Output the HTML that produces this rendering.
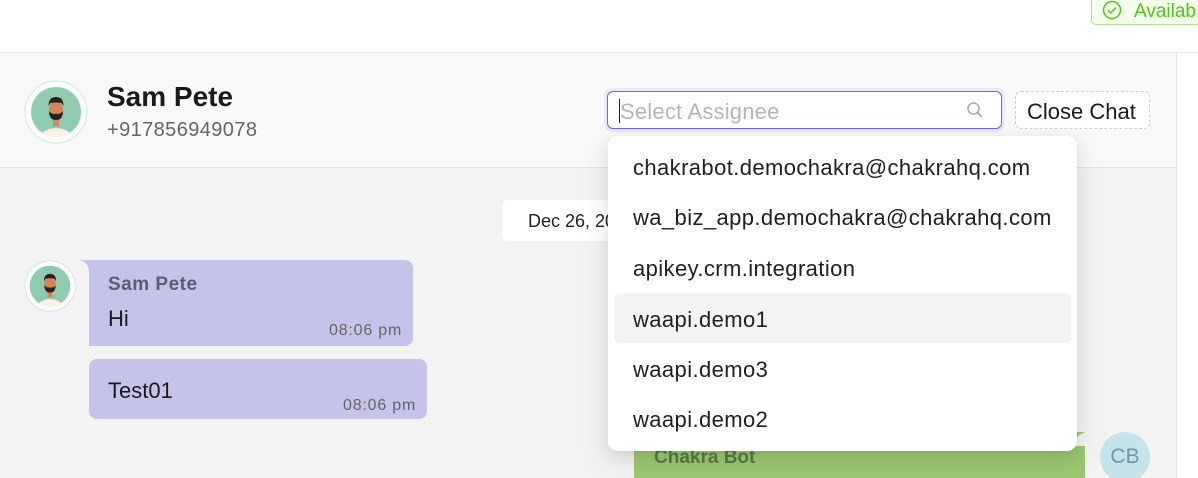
<!DOCTYPE html>
<html><head><style>
*{box-sizing:border-box;margin:0;padding:0}
html,body{width:1198px;height:478px;overflow:hidden}
body{position:relative;background:#fff;font-family:"Liberation Sans",sans-serif;}
.abs{position:absolute}
</style></head><body>
<div class="abs" style="left:1091px;top:-4px;width:120px;height:29px;background:#f3fdec;border:1px solid #a9e38f;border-radius:5px;color:#52c41a;font-size:19px;padding:4px 0 0 42px;">Availab</div>
<svg class="abs" style="left:1102px;top:0px" width="20" height="20" viewBox="0 0 20 20"><circle cx="10" cy="10" r="8.5" fill="none" stroke="#52c41a" stroke-width="1.5"/><path d="M6 10.2l2.8 2.8 5-5.5" fill="none" stroke="#52c41a" stroke-width="1.5"/></svg>
<div class="abs" style="left:0;top:52px;width:1176px;height:116px;background:#f9f9f9;border-top:1px solid #e8e8e8;border-bottom:1px solid #e3e3e3"></div>
<div class="abs" style="left:0;top:168px;width:1176px;height:310px;background:#f3f3f3"></div>
<div class="abs" style="left:1176px;top:52px;width:22px;height:426px;background:#fff;border-left:1px solid #e8e8e8;border-top:1px solid #e8e8e8"></div>
<svg class="abs" style="left:24px;top:80px" width="64" height="64" viewBox="0 0 64 64"><circle cx="32" cy="32" r="31" fill="#fff" stroke="#c9e6ea"/><circle cx="32" cy="32" r="25" fill="#8fcbae"/><clipPath id="c1"><circle cx="32" cy="32" r="25"/></clipPath><g clip-path="url(#c1)"><path d="M14 60q3-11 18-12q15 1 18 12z" fill="#fbf1e3"/><rect x="29" y="38" width="6" height="8" fill="#d88457"/><ellipse cx="32" cy="30" rx="7" ry="9" fill="#d88457"/><path d="M25 31q0 9 7 9q7 0 7-9q-2 3-7 3q-5 0-7-3z" fill="#2a2222"/><path d="M24.5 26q0-9 7.5-9q7.5 0 7.5 9l-2-3q-5.5-1-11 0z" fill="#2a2222"/></g></svg>
<div class="abs" style="left:107px;top:81px;font-size:28px;font-weight:bold;color:#1a1a1a">Sam Pete</div>
<div class="abs" style="left:107px;top:119px;font-size:20px;letter-spacing:0.4px;color:#666">+917856949078</div>
<div class="abs" style="left:604px;top:88px;width:401px;height:44px;border-radius:8px;background:#ece8fb"></div>
<div class="abs" style="left:607px;top:91px;width:395px;height:38px;border:1.5px solid #7b5cf5;border-radius:6px;background:#fff;font-size:22px;letter-spacing:0.2px;color:#b5b5b5;padding:7px 0 0 12px">Select Assignee</div>
<div class="abs" style="left:619px;top:99px;width:1px;height:24px;background:#222"></div>
<svg class="abs" style="left:966px;top:101px" width="18" height="18" viewBox="0 0 18 18"><circle cx="7.5" cy="7.5" r="5.5" fill="none" stroke="#aaa" stroke-width="1.6"/><path d="M11.5 11.5l4.5 4.5" stroke="#aaa" stroke-width="1.6"/></svg>
<div class="abs" style="left:1015px;top:91px;width:135px;height:38px;border:1px dashed #d0d0d0;border-radius:6px;background:#fff;font-size:22px;color:#1a1a1a;padding:7px 0 0 11px">Close Chat</div>
<div class="abs" style="left:502px;top:200px;width:140px;height:41px;background:#fff;border-radius:6px;font-size:18px;color:#222;padding:11px 0 0 26px">Dec 26, 2024</div>
<svg class="abs" style="left:24px;top:260px" width="52" height="52" viewBox="0 0 64 64"><circle cx="32" cy="32" r="31" fill="#fff" stroke="#c9e6ea"/><circle cx="32" cy="32" r="25" fill="#8fcbae"/><clipPath id="c2"><circle cx="32" cy="32" r="25"/></clipPath><g clip-path="url(#c2)"><path d="M14 60q3-11 18-12q15 1 18 12z" fill="#fbf1e3"/><rect x="29" y="38" width="6" height="8" fill="#d88457"/><ellipse cx="32" cy="30" rx="7" ry="9" fill="#d88457"/><path d="M25 31q0 9 7 9q7 0 7-9q-2 3-7 3q-5 0-7-3z" fill="#2a2222"/><path d="M24.5 26q0-9 7.5-9q7.5 0 7.5 9l-2-3q-5.5-1-11 0z" fill="#2a2222"/></g></svg>
<div class="abs" style="left:78px;top:260px;width:11px;height:11px;background:#c5c3ea"></div>
<div class="abs" style="left:78px;top:260px;width:11px;height:11px;background:#f3f3f3;border-top-right-radius:11px"></div>
<div class="abs" style="left:89px;top:260px;width:324px;height:86px;background:#c5c3ea;border-radius:0 8px 8px 0"></div>
<div class="abs" style="left:108px;top:274px;font-size:19px;letter-spacing:0.5px;font-weight:bold;color:#5d5c70">Sam Pete</div>
<div class="abs" style="left:108px;top:306px;font-size:22px;color:#1a1a1a">Hi</div>
<div class="abs" style="left:329px;top:322px;font-size:16px;letter-spacing:0.8px;color:#666">08:06 pm</div>
<div class="abs" style="left:89px;top:359px;width:338px;height:60px;background:#c5c3ea;border-radius:8px"></div>
<div class="abs" style="left:108px;top:378px;font-size:22px;color:#1a1a1a">Test01</div>
<div class="abs" style="left:343px;top:397px;font-size:16px;letter-spacing:0.8px;color:#666">08:06 pm</div>
<div class="abs" style="left:634px;top:432px;width:451px;height:46px;background:#9cc873"></div>
<div class="abs" style="left:1074px;top:432px;width:14px;height:14px;background:#f3f3f3;border-top-left-radius:14px"></div>
<div class="abs" style="left:654px;top:447px;font-size:19px;font-weight:bold;color:#5b7a44">Chakra Bot</div>
<div class="abs" style="left:1100px;top:432px;width:50px;height:50px;border-radius:50%;background:#c5e4ea;color:#6a9aa5;font-size:21px;text-align:center;line-height:50px">CB</div>
<div class="abs" style="left:608px;top:136px;width:469px;height:315px;background:#fff;border-radius:10px;box-shadow:0 6px 16px rgba(0,0,0,0.08),0 3px 6px -4px rgba(0,0,0,0.12),0 9px 28px 8px rgba(0,0,0,0.05);font-size:22px;letter-spacing:0.4px;color:#1f1f1f">
<div style="position:absolute;left:6px;top:157px;width:457px;height:50px;background:#f3f3f3;border-radius:5px"></div>
<div style="position:absolute;left:25px;top:19px">chakrabot.demochakra@chakrahq.com</div>
<div style="position:absolute;left:25px;top:69px">wa_biz_app.demochakra@chakrahq.com</div>
<div style="position:absolute;left:25px;top:120px">apikey.crm.integration</div>
<div style="position:absolute;left:25px;top:171px">waapi.demo1</div>
<div style="position:absolute;left:25px;top:221px">waapi.demo3</div>
<div style="position:absolute;left:25px;top:271px">waapi.demo2</div>
</div>
</body></html>
